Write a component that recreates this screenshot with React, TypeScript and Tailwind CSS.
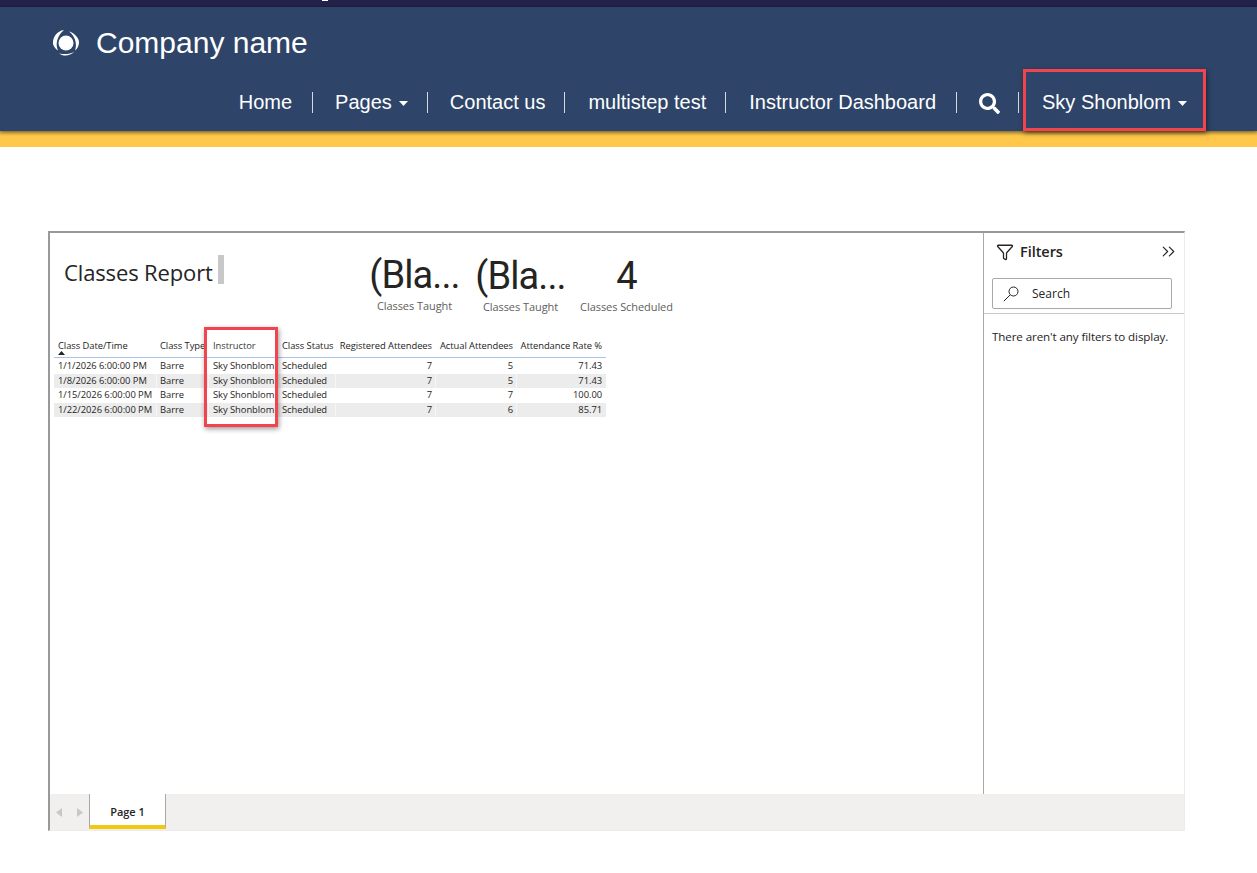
import React from 'react';
import { ChevronsRight, Filter } from 'lucide-react';
import { FaSearch } from 'react-icons/fa';

const rows = [
  ['1/1/2026 6:00:00 PM', 'Barre', 'Sky Shonblom', 'Scheduled', '7', '5', '71.43'],
  ['1/8/2026 6:00:00 PM', 'Barre', 'Sky Shonblom', 'Scheduled', '7', '5', '71.43'],
  ['1/15/2026 6:00:00 PM', 'Barre', 'Sky Shonblom', 'Scheduled', '7', '7', '100.00'],
  ['1/22/2026 6:00:00 PM', 'Barre', 'Sky Shonblom', 'Scheduled', '7', '6', '85.71'],
];

const gridCols = 'grid grid-cols-[103px_52px_69px_58px_100px_81px_89px]';

const Caret = () => (
  <svg width="9" height="5" viewBox="0 0 9 5" className="ml-[7px] mt-[3px]">
    <polygon points="0,0 9,0 4.5,5" fill="#ffffff" />
  </svg>
);

const Sep = () => <div className="h-[21px] w-px bg-[#d5d9e0]" />;

const Logo = () => (
  <svg width="28" height="28" viewBox="0 0 28 28">
    <circle cx="14" cy="14" r="7.5" fill="#ffffff" />
    <path d="M12 1 C5 2 0.5 8 1 15 C2 18 4 20.5 6 21.5 C3 15 5 7 12 1 Z" fill="#ffffff" />
    <path d="M17 2.5 C22 3.5 27 9 27 13 C27 17 25.5 19.5 23 21.5 C25.5 15 23 7 17 2.5 Z" fill="#ffffff" />
    <path d="M7 24.5 C11 27.5 18 27.5 22.5 22.5 C18 25.5 12 25.5 7 24.5 Z" fill="#ffffff" />
  </svg>
);

const Kpi = ({ value, label, className }: { value: string; label: string; className: string }) => (
  <div className={`flex flex-col items-center ${className}`}>
    <div className="pt-[1px] text-[38px] leading-[44px] text-[#252423] whitespace-nowrap tracking-[-0.9px] font-['Roboto',sans-serif]">{value}</div>
    <div className="mt-[1px] whitespace-nowrap text-[11px] leading-[16px] text-[#605e5c] font-['Open_Sans',sans-serif] tracking-[-0.07px]">{label}</div>
  </div>
);

const App: React.FC = () => {
  return (
    <div className="min-h-[873px] w-[1257px] bg-white font-['Liberation_Sans',sans-serif]">
      <div className="h-[7px] bg-[#23224a] pl-[322px]">
        <div className="h-[1px] w-[6px] bg-white" />
      </div>

      <header className="relative h-[124px] bg-[#2e4569] shadow-[0_1px_4px_rgba(0,0,0,0.45)]">
        <div className="flex items-center pl-[52px] pt-[21px]">
          <Logo />
          <span className="ml-[16px] text-[30px] leading-[30px] text-white">Company name</span>
        </div>
        <nav className="mt-[32px] flex items-center justify-end pr-[70px] text-[20px] leading-[24px] text-white">
          <span>Home</span>
          <div className="ml-[20px] mr-[22px]"><Sep /></div>
          <span className="flex items-center">Pages<Caret /></span>
          <div className="ml-[19px] mr-[22px]"><Sep /></div>
          <span>Contact us</span>
          <div className="ml-[19px] mr-[23px]"><Sep /></div>
          <span>multistep test</span>
          <div className="ml-[19px] mr-[23px]"><Sep /></div>
          <span>Instructor Dashboard</span>
          <div className="ml-[20px] mr-[22px]"><Sep /></div>
          <FaSearch size={21} className="mt-[2px]" />
          <div className="ml-[18px] mr-[23px]"><Sep /></div>
          <span className="flex items-center">Sky Shonblom<Caret /></span>
        </nav>
        <div className="absolute left-[1023px] top-[62px] h-[62px] w-[183px] border-[3px] border-[#f2444e] shadow-[1px_2px_5px_rgba(0,0,0,0.5)]" />
      </header>
      <div className="h-[16px] bg-gradient-to-b from-[#d2a645] via-[#ffc84a] via-30% to-[#ffc84a]" />

      <main className="ml-[48px] mt-[84px] flex h-[600px] w-[1137px] flex-col border-l-2 border-t-2 border-l-[#999999] border-t-[#999999] border-r border-b border-r-[#ececec] border-b-[#ececec] font-['Open_Sans',sans-serif]">
        <div className="flex min-h-0 flex-1">
          <section className="relative w-[933px] pl-[4px]">
            <div className="flex pt-[19px]">
              <div className="ml-[10px] flex w-[306px] items-start">
                <span className="mt-[5px] text-[22px] leading-[30px] text-[#252423] tracking-[-0.13px]">Classes Report</span>
                <div className="ml-[5px] mt-[3px] h-[29px] w-[6px] bg-[#c8c8c8]" />
              </div>
              <Kpi value="(Bla..." label="Classes Taught" className="w-[89px]" />
              <Kpi value="(Bla..." label="Classes Taught" className="ml-[17px] mt-[1px] w-[89px]" />
              <Kpi value="4" label="Classes Scheduled" className="ml-[15px] mt-[1px] w-[93px]" />
            </div>

            <div className="mt-[18px] w-[552px] text-[9.4px] text-[#252423] tracking-[-0.05px]">
              <div className={`${gridCols} h-[25px] items-start border-b border-b-[#a9c4e8] pt-[6px] leading-[14px]`}>
                <div className="relative pl-[4px]">
                  Class Date/Time
                  <svg width="7" height="4" viewBox="0 0 7 4" className="absolute left-[4px] top-[12px]">
                    <polygon points="3.5,0 7,4 0,4" fill="#252423" />
                  </svg>
                </div>
                <div className="whitespace-nowrap pl-[3px]">Class Type</div>
                <div className="pl-[4px] text-[#3b3a39]">Instructor</div>
                <div className="whitespace-nowrap pl-[4px]">Class Status</div>
                <div className="whitespace-nowrap pr-[4px] text-right">Registered Attendees</div>
                <div className="whitespace-nowrap pr-[4px] text-right">Actual Attendees</div>
                <div className="whitespace-nowrap pr-[4px] text-right">Attendance Rate %</div>
              </div>
              <div className="pt-[1px]">
                {rows.map((row, i) => (
                  <div key={row[0]} className={`${gridCols} h-[14.5px] leading-[14.5px] ${i % 2 === 1 ? 'bg-[#ececec]' : 'bg-white'}`}>
                    <div className="whitespace-nowrap border-r border-r-white/50 pl-[4px]">{row[0]}</div>
                    <div className="border-r border-r-white/50 pl-[3px]">{row[1]}</div>
                    <div className="whitespace-nowrap border-r border-r-white/50 pl-[4px]">{row[2]}</div>
                    <div className="border-r border-r-white/50 pl-[4px]">{row[3]}</div>
                    <div className="border-r border-r-white/50 pr-[3px] text-right">{row[4]}</div>
                    <div className="border-r border-r-white/50 pr-[3px] text-right">{row[5]}</div>
                    <div className="pr-[4px] text-right">{row[6]}</div>
                  </div>
                ))}
              </div>
            </div>
            <div className="absolute left-[154px] top-[94px] h-[100px] w-[74px] border-[3px] border-[#f2444e] shadow-[1px_2px_5px_rgba(0,0,0,0.4)]" />
          </section>

          <aside className="w-[201px] border-l border-l-[#a8a8a8]">
            <div className="flex h-[37px] items-center pl-[12px] pr-[5px]">
              <Filter size={18} strokeWidth={1.7} className="text-[#252423]" />
              <span className="ml-[6px] text-[14.5px] font-semibold text-[#252423] tracking-[-0.05px]">Filters</span>
              <ChevronsRight size={21} strokeWidth={1.3} className="ml-auto text-[#252423]" />
            </div>
            <div className="mx-[8px] mt-[8px] flex h-[31px] w-[180px] items-center rounded-[2px] border border-[#a8a8a8] pl-[10px]">
              <svg width="16" height="16" viewBox="0 0 16 16" fill="none" stroke="#252423" strokeWidth="1">
                <circle cx="10.5" cy="5.5" r="4.5" />
                <line x1="7.3" y1="8.7" x2="0.8" y2="15.2" />
              </svg>
              <span className="ml-[13px] text-[12px] text-[#252423]">Search</span>
            </div>
            <div className="mt-[4px] border-t border-t-[#c8c8c8] px-[8px] pt-[14px] text-[11.6px] leading-[18px] text-[#252423] tracking-[-0.1px]">
              There aren't any filters to display.
            </div>
          </aside>
        </div>

        <div className="flex h-[36px] bg-[#f1f0ee]">
          <div className="flex w-[39px] items-center justify-between px-[6px]">
            <svg width="6" height="9" viewBox="0 0 6 9"><polygon points="6,0 6,9 0,4.5" fill="#c8c8c8" /></svg>
            <svg width="6" height="9" viewBox="0 0 6 9"><polygon points="0,0 0,9 6,4.5" fill="#c8c8c8" /></svg>
          </div>
          <div className="flex h-[35px] w-[77px] items-center justify-center border-x border-x-[#a8a8a8] border-b-[4px] border-b-[#f2c811] bg-white pt-[6px] text-[11px] font-semibold text-[#252423]">
            Page 1
          </div>
        </div>
      </main>
    </div>
  );
};

export default App;
